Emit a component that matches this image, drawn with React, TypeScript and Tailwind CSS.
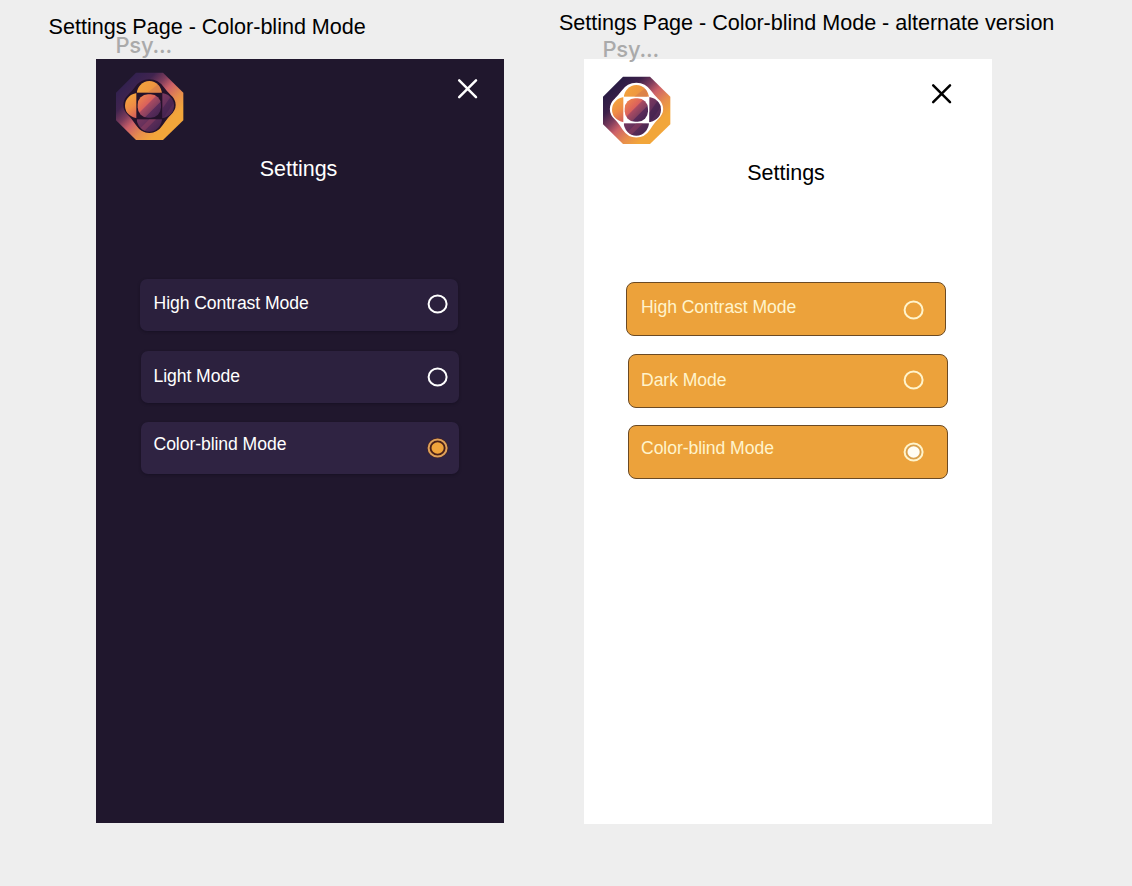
import React from "react";

type Theme = "dark" | "light";

function Logo({ theme }: { theme: Theme }) {
  const dark = theme === "dark";
  const line = dark ? "#24122a" : "#ffffff";
  const id = (name: string) => `${theme}-${name}`;
  const url = (name: string) => `url(#${theme}-${name})`;
  const outline =
    "M118 42C138 42 150 51 160 65C168 76 173 81 180 88C191 97 195 105 195 117C195 129 190 137 180 146C172 153 166 162 156 177C146 192 135 199 118 199C101 199 90 192 80 177C70 162 64 153 56 146C46 137 42 129 42 117C42 105 46 97 56 88C63 81 68 76 76 65C86 51 98 42 118 42Z";
  return (
    <svg width="80" height="80" viewBox="0 0 240 240" className="block">
      <defs>
        <linearGradient id={id("frame")} gradientUnits="userSpaceOnUse" x1="50" y1="50" x2="190" y2="190">
          <stop offset="0" stopColor={dark ? "#33214f" : "#2a1c44"} />
          <stop offset="0.2" stopColor={dark ? "#40244f" : "#3c2049"} />
          <stop offset="0.36" stopColor="#7d3c5c" />
          <stop offset="0.5" stopColor="#cc6068" />
          <stop offset="0.7" stopColor="#e88f4c" />
          <stop offset="0.87" stopColor="#f2a63a" />
        </linearGradient>
        <linearGradient id={id("warm")} gradientUnits="userSpaceOnUse" x1="70" y1="60" x2="150" y2="110">
          <stop offset="0" stopColor="#f3a63c" />
          <stop offset="0.5" stopColor="#ef983f" />
          <stop offset="1" stopColor="#dd7f4a" />
        </linearGradient>
        <linearGradient id={id("side")} gradientUnits="userSpaceOnUse" x1="48" y1="95" x2="85" y2="150">
          <stop offset="0" stopColor="#f3a33c" />
          <stop offset="0.5" stopColor="#ee8b46" />
          <stop offset="1" stopColor="#d35c5a" />
        </linearGradient>
        <linearGradient id={id("core")} gradientUnits="userSpaceOnUse" x1="88" y1="90" x2="148" y2="150">
          <stop offset="0" stopColor="#f0844c" />
          <stop offset="0.4" stopColor="#d9605c" />
          <stop offset="0.43" stopColor="#a84a62" />
          <stop offset="0.66" stopColor="#85405f" />
          <stop offset="0.69" stopColor="#5a2b5a" />
          <stop offset="1" stopColor="#44254f" />
        </linearGradient>
        <linearGradient id={id("cool")} gradientUnits="userSpaceOnUse" x1="100" y1="100" x2="175" y2="180">
          <stop offset="0" stopColor="#8c3f60" />
          <stop offset="0.5" stopColor="#66315c" />
          <stop offset="1" stopColor="#3b214d" />
        </linearGradient>
        <clipPath id={id("vertical")}>
          <rect x="80" y="45" width="76" height="152" rx="38" ry="40" />
        </clipPath>
        <clipPath id={id("horizontal")}>
          <rect x="45" y="81" width="147" height="76" rx="40" ry="38" />
        </clipPath>
      </defs>
      <path d="M78 20H159L220 80V163L159 222H78L18 163V80Z" fill={url("frame")} />
      <path d={outline} fill={line} stroke={line} strokeWidth={dark ? 4 : 7} />
      <g clipPath={url("horizontal")}>
        <rect x="45" y="78" width="34" height="84" fill={url("side")} />
        <rect x="157" y="78" width="36" height="84" fill={url("cool")} />
        <path d="M157 128L182 92L196 104L160 156H157Z" fill="#3f224e" opacity="0.6" />
      </g>
      <g clipPath={url("vertical")}>
        <rect x="80" y="44" width="76" height="36" fill={url("warm")} />
        <rect x="80" y="160" width="76" height="39" fill={url("cool")} />
        <path d="M112 80L150 50V80Z" fill="#cf7550" opacity="0.45" />
        <path d="M88 190L118 160H138L100 198Z" fill="#94405f" opacity="0.5" />
      </g>
      <rect x="83" y="85" width="70" height="70" rx="31" fill={url("core")} />
    </svg>
  );
}

function CloseIcon() {
  return (
    <svg width="22" height="22" viewBox="0 0 22 22" fill="none" stroke="currentColor" strokeWidth="2.5" strokeLinecap="round">
      <path d="M2.2 2.4L19 19.2M19 2.4L2.2 19.2" />
    </svg>
  );
}

function Radio({ theme, checked = false }: { theme: Theme; checked?: boolean }) {
  const dark = theme === "dark";
  const ring = dark ? (checked ? "#dda05a" : "#ffffff") : "#fff4cc";
  return (
    <svg width="24" height="24" viewBox="0 0 24 24" className="block">
      {checked && dark && <ellipse cx="11.6" cy="12" rx="10.4" ry="10" fill="#4a2018" />}
      {checked && !dark && <ellipse cx="11.6" cy="12" rx="9" ry="8.5" fill="#d9a04c" />}
      <ellipse cx="11.6" cy="12" rx="9" ry="8.5" fill="none" stroke={ring} strokeWidth="2" />
      {checked && <ellipse cx="11.6" cy="12" rx="6.1" ry="5.8" fill={dark ? "#f0a43c" : "#fffdf4"} />}
    </svg>
  );
}

interface OptionProps {
  theme: Theme;
  label: string;
  checked?: boolean;
  card: string;
  text: string;
  radio: string;
}

function Option({ theme, label, checked, card, text, radio }: OptionProps) {
  return (
    <div className={`flex items-start justify-between ${card}`}>
      <span className={`text-[17.6px] leading-5 tracking-[-0.07px] whitespace-nowrap ${text}`}>{label}</span>
      <span className={radio}>
        <Radio theme={theme} checked={checked} />
      </span>
    </div>
  );
}

const darkCard = "h-[52px] w-[318px] rounded-[7px] shadow-[0_1px_3px_rgba(10,5,20,0.35)]";
const lightCard = "h-[54px] w-[320px] rounded-[8px] border border-[#6b4a24] bg-[#eca23b]";

export default function App() {
  return (
    <main className="flex h-[886px] w-[1132px] gap-20 overflow-hidden bg-[#eeeeee] pl-24 font-['Liberation_Sans',Arial,sans-serif]">
      <section className="w-[408px]">
        <header className="h-[58.5px] pt-[15px]">
          <h1 className="-ml-[47.4px] text-[21.6px] leading-6 tracking-[-0.03px] whitespace-nowrap text-black">Settings Page - Color-blind Mode</h1>
          <p className="-mt-1.5 pl-[19.4px] font-['Inter',sans-serif] text-[22px] leading-6 font-medium tracking-[-0.2px] text-[#aaaaaa]">Psy...</p>
        </header>
        <div className="h-[764.5px] bg-[#20172d] text-white">
          <div className="flex h-[98px] items-start justify-between pt-[7.5px] pr-[25.5px] pl-3.5">
            <Logo theme="dark" />
            <span className="pt-[12px]">
              <CloseIcon />
            </span>
          </div>
          <h2 className="h-[122.5px] pr-[3px] text-center text-[21.5px] leading-6">Settings</h2>
          <div className="flex flex-col">
            <Option theme="dark" label="High Contrast Mode" card={`ml-[43.5px] bg-[#2b203d] ${darkCard}`} text="pt-3.5 pl-3.5" radio="pt-[12.7px] pr-2" />
            <Option theme="dark" label="Light Mode" card={`mt-5 ml-[45px] bg-[#2c213e] ${darkCard}`} text="pt-[15px] pl-[12.5px]" radio="pt-[14px] pr-[9.5px]" />
            <Option theme="dark" label="Color-blind Mode" checked card={`mt-[19px] ml-[45px] bg-[#2f2342] ${darkCard}`} text="pt-3 pl-[12.5px]" radio="pt-[14.3px] pr-[9.5px]" />
          </div>
        </div>
      </section>

      <section className="w-[408px]">
        <header className="h-[59px] pt-[11px]">
          <h1 className="-ml-[25px] text-[21.6px] leading-6 tracking-[-0.03px] whitespace-nowrap text-black">Settings Page - Color-blind Mode - alternate version</h1>
          <p className="mt-0.5 pl-[18.4px] font-['Inter',sans-serif] text-[22px] leading-6 font-medium tracking-[-0.2px] text-[#aaaaaa]">Psy...</p>
        </header>
        <div className="h-[765px] bg-white text-black">
          <div className="flex h-[102px] items-start justify-between pt-[11px] pr-[39px] pl-[13px]">
            <Logo theme="light" />
            <span className="pt-[13px]">
              <CloseIcon />
            </span>
          </div>
          <h2 className="h-[121.4px] pr-1 text-center text-[21.5px] leading-6">Settings</h2>
          <div className="flex flex-col text-[#fff4cc]">
            <Option theme="light" label="High Contrast Mode" card={`ml-[42.4px] ${lightCard}`} text="pt-[13.5px] pl-[13.6px]" radio="pt-[15px] pr-[19px]" />
            <Option theme="light" label="Dark Mode" card={`mt-[17.6px] ml-[43.5px] ${lightCard}`} text="pt-[15.2px] pl-[12.5px]" radio="pt-[13.4px] pr-[20.5px]" />
            <Option theme="light" label="Color-blind Mode" checked card={`mt-[17px] ml-[43.5px] ${lightCard}`} text="pt-[12.2px] pl-[12.5px]" radio="pt-[14.4px] pr-[20.5px]" />
          </div>
        </div>
      </section>
    </main>
  );
}
